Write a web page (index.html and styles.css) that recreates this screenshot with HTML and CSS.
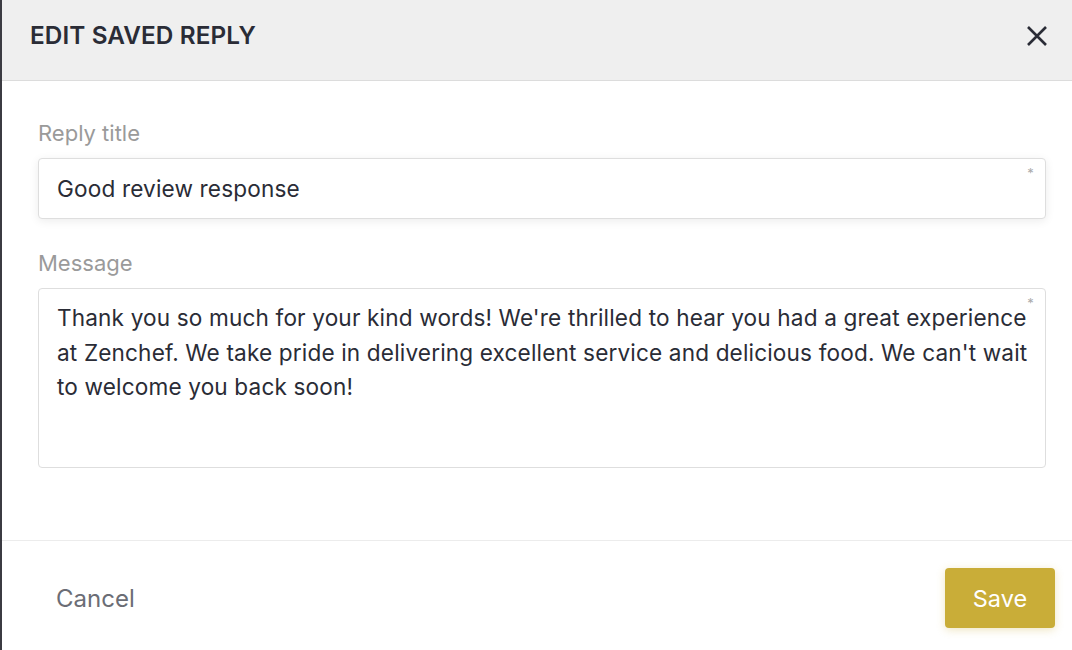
FILE: index.html
```html
<!DOCTYPE html>
<html>
<head>
<meta charset="utf-8">
<link rel="stylesheet" href="styles.css">
</head>
<body>
<div class="modal">
  <header class="modal-header">
    <h1 class="modal-title">EDIT SAVED REPLY</h1>
    <button class="close-btn" aria-label="Close">
      <svg width="22" height="22" viewBox="0 0 22 22"><path d="M2 2 L20 20 M20 2 L2 20" stroke="#2a2c36" stroke-width="2.6" stroke-linecap="butt" fill="none"/></svg>
    </button>
  </header>
  <main class="modal-body">
    <div class="field">
      <label class="field-label">Reply title</label>
      <div class="input input-shadow">
        <span class="input-text">Good review response</span>
        <span class="req">*</span>
      </div>
    </div>
    <div class="field">
      <label class="field-label">Message</label>
      <div class="input textarea">
        <span class="input-text">Thank you so much for your kind words! We're thrilled to hear you had a great experience at Zenchef. We take pride in delivering excellent service and delicious food. We can't wait to welcome you back soon!</span>
        <span class="req">*</span>
      </div>
    </div>
  </main>
  <footer class="modal-footer">
    <button class="btn-cancel">Cancel</button>
    <button class="btn-save">Save</button>
  </footer>
</div>
</body>
</html>
```

FILE: styles.css
```css
* { box-sizing: border-box; }
html, body { margin: 0; padding: 0; height: 100%; }
body {
  background: #ffffff;
  font-family: Inter, "Noto Sans", sans-serif;
  color: #2a2c36;
  border-left: 2px solid #3b3b42;
}
.modal { display: flex; flex-direction: column; height: 650px; }
.modal-header {
  height: 81px;
  flex: none;
  background: #efefef;
  border-bottom: 1px solid #dcdcdc;
  display: flex;
  align-items: center;
  justify-content: space-between;
  padding: 0 24px 10px 28px;
}
.modal-title {
  margin: 0;
  font-size: 24.3px;
  font-weight: 600;
  letter-spacing: 0.1px;
  color: #2a2c36;
  line-height: 30px;
}
.close-btn {
  border: 0; background: none; padding: 0; width: 22px; height: 22px;
  display: flex; cursor: pointer;
  margin-top: 2px;
}
.modal-body {
  flex: none;
  padding: 39px 26px 0 36px;
  display: flex; flex-direction: column; gap: 31px;
  height: 460px;
  border-bottom: 1px solid #ececec;
}
.field { display: flex; flex-direction: column; gap: 12px; }
.field-label { font-size: 22px; color: #9a9a9a; line-height: 26px; }
.input {
  position: relative;
  border: 1px solid #dedede;
  border-radius: 4px;
  background: #fff;
  height: 61px;
  padding: 0 36px 0 18px;
  display: flex; align-items: center;
  font-size: 22.6px;
  letter-spacing: 0.15px;
  color: #2a2c36;
}
.input-shadow { box-shadow: 0 2px 10px rgba(0,0,0,0.08); }
.textarea {
  height: 180px;
  align-items: flex-start;
  padding-top: 12px;
  line-height: 34.5px;
  padding-right: 10px;
}
.req {
  position: absolute; top: 6px; right: 11px;
  font-size: 13px; line-height: 16px; color: #aaa;
}
.modal-footer {
  flex: 1;
  display: flex; align-items: center; justify-content: space-between;
  padding: 5px 17px 0 54px;
}
.btn-cancel {
  border: 0; background: none; padding: 0;
  font-family: inherit; font-size: 24px; color: #6b6d75;
}
.btn-save {
  border: 0; border-radius: 4px;
  width: 110px; height: 60px;
  background: #c9ad38; color: #fff;
  font-family: inherit; font-size: 23.5px;
  box-shadow: 0 2px 8px rgba(201,173,56,0.3);
}
```
